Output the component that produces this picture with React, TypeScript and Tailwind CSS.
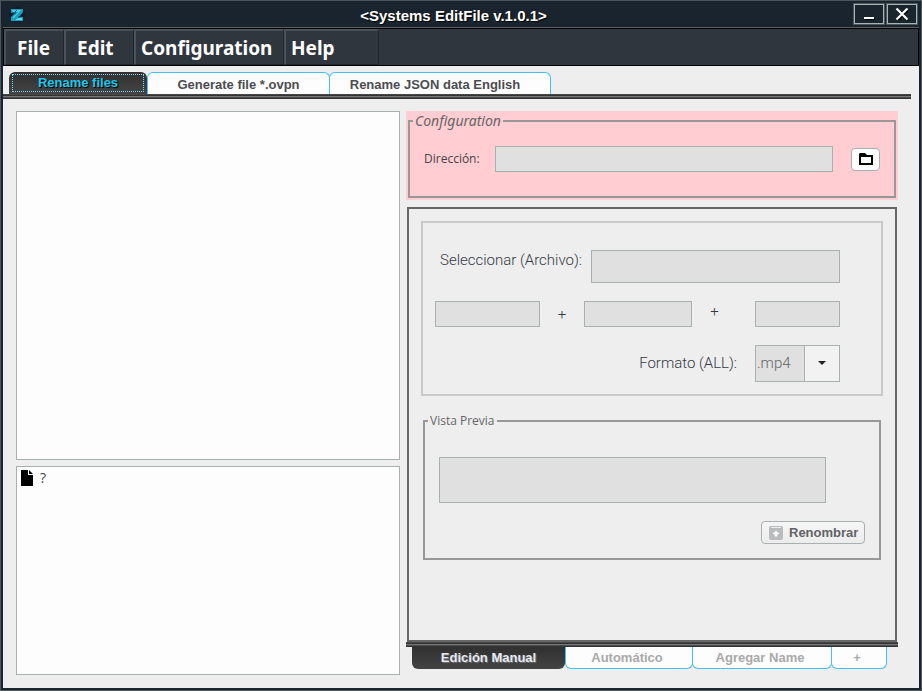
import React from "react";

const menus = [
  { label: "File", width: "w-[60px] pl-[11px]" },
  { label: "Edit", width: "w-[70px] pl-[11px]" },
  { label: "Configuration", width: "w-[150px] pl-[5px]" },
  { label: "Help", width: "w-[95px] pl-[5px]" },
];

const field = "block min-w-0 border border-[#a9b0b1] bg-[#e0e0e0] px-1 text-sm outline-none";
const tabFont = "font-['Liberation_Sans',Arial,sans-serif] font-bold";
const topTab = "h-[22px] rounded-t-md border border-b-0 border-[#45bdf5] bg-[#fdfdfd] pt-0.5 text-[13px] leading-5 text-[#4c4c50]";
const bottomTab = "h-[22px] rounded-b-md border border-t-0 border-[#45bdf5] bg-[#fdfdfd] text-[13px] leading-5 text-[#a9a9a9]";
const ridge =
  "h-[5px] bg-[linear-gradient(to_bottom,#474747_0_1px,#333_1px_2px,#777_2px_3px,#4b4b4b_3px_4px,#333_4px_5px)]";

function LogoIcon() {
  return (
    <svg className="h-4 w-4" viewBox="0 0 16 16" aria-hidden="true">
      <circle cx="8" cy="8" r="8" fill="#101e2e" />
      <path d="M2 2h12v3l-4 5h4v4H2v-4l4-4H2z" fill="#1f9dbb" />
      <path d="M3 3h9L4 12v-2l5-5H4z" fill="#3fd0e6" />
      <path d="M7 12l6-2v3H7z" fill="#4ce0f0" />
      <path d="M3 6h4M9 10h4M8 3l-2 2" stroke="#0d4560" />
    </svg>
  );
}

function WindowButton({ label, children }: { label: string; children: React.ReactNode }) {
  return (
    <button
      type="button"
      aria-label={label}
      className="flex h-5 w-[30px] items-center justify-center border border-[#a9b3b5] bg-[#1b252e] outline outline-1 outline-[#4c585c]"
    >
      {children}
    </button>
  );
}

function TitleBar() {
  return (
    <header className="flex h-[27px] items-center border-b border-[#565f66] bg-[#1a242e] pr-0.5">
      <div className="pt-0.5 pl-1.5">
        <LogoIcon />
      </div>
      <h1 className="flex-1 pt-1 pl-7 text-center font-['Liberation_Sans',Arial,sans-serif] text-[15px] leading-5 font-bold text-white [text-shadow:1px_1px_1px_#000]">
        &lt;Systems EditFile v.1.0.1&gt;
      </h1>
      <div className="flex gap-[3px]">
        <WindowButton label="Minimize">
          <svg className="h-4 w-4" viewBox="0 0 16 16">
            <path d="M4 13h10" stroke="#000" strokeWidth="2" />
            <path d="M3 12h10" stroke="#fff" strokeWidth="2" />
          </svg>
        </WindowButton>
        <WindowButton label="Close">
          <svg className="h-4 w-4" viewBox="0 0 16 16">
            <path d="M4 4l10 10M14 4L4 14" stroke="#000" strokeWidth="2" />
            <path d="M2.500 2.500l11 11M13.500 2.500l-11 11" stroke="#fff" strokeWidth="2.200" />
          </svg>
        </WindowButton>
      </div>
    </header>
  );
}

function MenuBar() {
  return (
    <nav className="flex h-[38px] border border-black bg-[#30363d]">
      {menus.map((m) => (
        <button
          key={m.label}
          type="button"
          className={`border-2 border-t-[#48535c] border-r-[#20262b] border-b-[#20262b] border-l-[#48535c] border-r border-b text-left font-['Noto_Sans',sans-serif] text-[19px] leading-8 font-bold text-white ${m.width}`}
        >
          {m.label}
        </button>
      ))}
    </nav>
  );
}

function Group({ title, titleClass, children }: { title: string; titleClass: string; children: React.ReactNode }) {
  return (
    <fieldset className="min-w-0 border-2 border-[#989898]">
      <legend className={`ml-[3px] px-0.5 text-[#65656a] ${titleClass}`}>{title}</legend>
      {children}
    </fieldset>
  );
}

function ConfigurationPanel() {
  return (
    <section className="bg-[#ffcdd2] px-0.5 pt-px pb-0.5">
      <Group title="Configuration" titleClass="font-['Noto_Sans',sans-serif] text-sm leading-[18px] italic">
        <div className="flex items-center px-3.5 pt-4 pb-6">
          <label htmlFor="dir" className="w-[71px] font-['Open_Sans',sans-serif] text-xs text-[#444]">
            Dirección:
          </label>
          <input id="dir" readOnly className={`${field} h-[26px] flex-1`} />
          <button
            type="button"
            aria-label="Abrir carpeta"
            className="ml-[18px] flex h-[23px] w-[29px] items-center justify-center rounded border border-[#a9b0b1] bg-[#fdfdfd]"
          >
            <svg className="h-3 w-3.5" viewBox="0 0 14 12">
              <path d="M0 1L1 0H6l2 2h6v10H0zM2 4v6h10V4z" fill="#000" fillRule="evenodd" />
            </svg>
          </button>
        </div>
      </Group>
    </section>
  );
}

function ManualForm() {
  const label = "font-light text-[15px] text-[#333a44]";
  return (
    <div className="flex flex-col gap-[18px] border-2 border-[#cacaca] pt-[27px] pr-[41px] pb-3 pl-3 font-['Roboto',sans-serif]">
      <div className="flex">
        <label htmlFor="archivo" className={`${label} w-[156px] shrink-0 pl-[5px] leading-5 whitespace-nowrap`}>
          Seleccionar (Archivo):
        </label>
        <input id="archivo" readOnly className={`${field} h-[33px] flex-1`} />
      </div>
      <div className="grid grid-cols-[105fr_44fr_108fr_63fr_85fr] text-center">
        <input aria-label="Prefijo" readOnly className={`${field} h-[26px]`} />
        <span className={`${label} leading-[26px]`}>+</span>
        <input aria-label="Nombre" readOnly className={`${field} h-[26px]`} />
        <span className={`${label} pr-[18px] leading-5`}>+</span>
        <input aria-label="Sufijo" readOnly className={`${field} h-[26px]`} />
      </div>
      <div className="flex items-center justify-end gap-[18px]">
        <label htmlFor="formato" className={label}>
          Formato (ALL):
        </label>
        <div className="relative w-[85px]">
          <select
            id="formato"
            className="block h-[37px] w-full appearance-none border border-[#a9b0b1] bg-[linear-gradient(to_right,#e0e0e0_0_48px,#a9b0b1_48px_49px,#f2f2f2_49px)] pl-px text-[15px] font-light text-[#65656a]"
          >
            <option>.mp4</option>
          </select>
          <svg className="pointer-events-none absolute top-4 right-3.5 h-1 w-2" viewBox="0 0 8 4">
            <path d="M0 0h8L4 4z" fill="#222" />
          </svg>
        </div>
      </div>
    </div>
  );
}

function PreviewGroup() {
  return (
    <div className="mx-0.5 mt-[17px]">
      <Group title="Vista Previa" titleClass="font-['Open_Sans',sans-serif] text-xs leading-4">
        <div className="flex flex-col px-3.5 pt-7 pb-3.5">
          <input aria-label="Vista Previa" readOnly className={`${field} mr-[39px] h-[46px]`} />
          <button
            type="button"
            className={`${tabFont} mt-[18px] flex h-[23px] w-[104px] items-center gap-1.5 self-end rounded border border-[#a9b0b1] bg-linear-to-b from-[#f6f6f6] to-[#ececec] pl-[7px] text-[13px] text-[#636367]`}
          >
            <svg className="h-3.5 w-3.5" viewBox="0 0 14 14">
              <rect width="14" height="14" rx="2" fill="#b9bcbc" />
              <path d="M2 1.500h10" stroke="#eee" />
              <path d="M7 4.500L3.500 8h2v2.500h3V8h2z" fill="#fff" />
            </svg>
            Renombrar
          </button>
        </div>
      </Group>
    </div>
  );
}

export default function App() {
  return (
    <div className="flex min-h-screen flex-col border border-[#4a585d] bg-[#1a242e] px-0.5 pb-0.5">
      <TitleBar />
      <MenuBar />
      <main className="flex flex-1 flex-col bg-[#eeeeee] pt-1.5">
        <div role="tablist" className={`${tabFont} flex pl-1.5`}>
          <button
            type="button"
            role="tab"
            aria-selected="true"
            className="h-[22px] w-[138px] rounded-t-md bg-linear-to-b from-[#303030] to-[#444] px-[3px] text-[13px] text-[#1bc8ee] [text-shadow:1px_1px_1px_#000]"
          >
            <span className="block h-[18px] border border-dotted border-[#7ed6f5] leading-4">Rename files</span>
          </button>
          <button type="button" role="tab" className={`${topTab} w-[183px]`}>
            Generate file *.ovpn
          </button>
          <button type="button" role="tab" className={`${topTab} -ml-px w-[222px] pr-2.5`}>
            Rename JSON data English
          </button>
        </div>
        <div className={`${ridge} mr-2`} />
        <div className="grid flex-1 grid-cols-[384fr_492fr] gap-1.5 pt-3 pr-[21px] pl-[13px]">
          <div className="mb-[13px] flex flex-col gap-1.5">
            <ul className="flex-[349] border border-[#a9b0b1] bg-[#fdfdfd]" />
            <ul className="flex-[209] border border-[#a9b0b1] bg-[#fdfdfd]">
              <li className="flex items-center gap-[7px] px-1 pt-0.5 font-['Open_Sans',sans-serif] text-sm leading-[18px] text-[#444]">
                <svg className="h-4 w-3" viewBox="0 0 12 16">
                  <path d="M0 0h7v5h5v11H0zM8 0l4 4H8z" fill="#000" />
                </svg>
                ?
              </li>
            </ul>
          </div>
          <div className="mb-[19px] flex flex-col">
            <ConfigurationPanel />
            <section className="mx-px mt-[7px] flex-1 border-2 border-[#666] p-3">
              <ManualForm />
              <PreviewGroup />
            </section>
            <div className={ridge} />
            <div role="tablist" className={`${tabFont} flex pl-1.5`}>
              <button
                type="button"
                role="tab"
                aria-selected="true"
                className="h-[22px] w-[153px] rounded-b-md bg-linear-to-b from-[#303030] to-[#444] text-[13px] text-[#e8e8f0] [text-shadow:1px_1px_1px_#777]"
              >
                Edición Manual
              </button>
              <button type="button" role="tab" className={`${bottomTab} w-32 pr-1`}>
                Automático
              </button>
              <button type="button" role="tab" className={`${bottomTab} -ml-px w-[140px] pr-1`}>
                Agregar Name
              </button>
              <button type="button" role="tab" className={`${bottomTab} -ml-px w-14 pr-1`}>
                +
              </button>
            </div>
          </div>
        </div>
      </main>
    </div>
  );
}
